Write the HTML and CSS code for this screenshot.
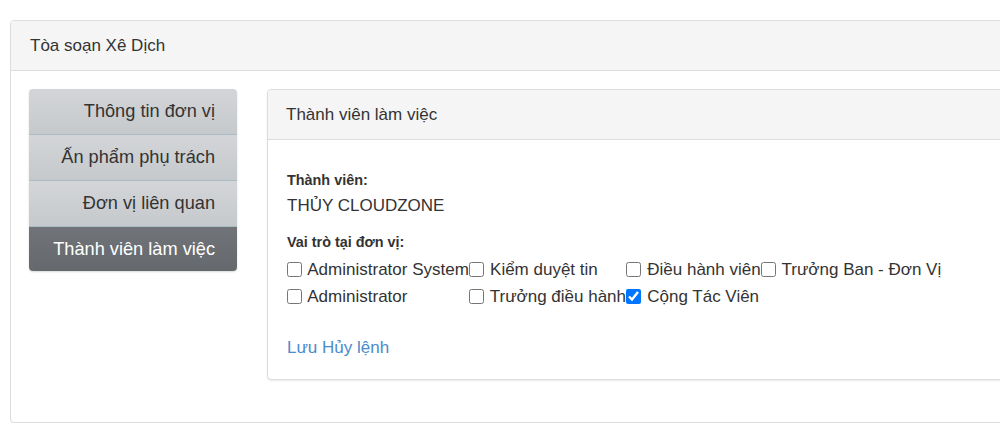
FILE: index.html
```html
<!DOCTYPE html>
<html lang="vi">
<head>
<meta charset="utf-8">
<title>Tòa soạn Xê Dịch</title>
<link rel="stylesheet" href="styles.css">
</head>
<body>
<div class="page">
  <div class="panel">
    <div class="panel-heading">Tòa soạn Xê Dịch</div>
    <div class="panel-body">
      <ul class="side-nav">
        <li class="nav-item">Thông tin đơn vị</li>
        <li class="nav-item">Ấn phẩm phụ trách</li>
        <li class="nav-item">Đơn vị liên quan</li>
        <li class="nav-item active">Thành viên làm việc</li>
      </ul>
      <div class="card">
        <div class="card-heading">Thành viên làm việc</div>
        <div class="card-body">
          <div class="field-label">Thành viên:</div>
          <div class="field-value">THỦY CLOUDZONE</div>
          <div class="field-label roles-label">Vai trò tại đơn vị:</div>
          <div class="roles">
            <label class="role"><input type="checkbox"> Administrator System</label>
            <label class="role"><input type="checkbox"> Kiểm duyệt tin</label>
            <label class="role"><input type="checkbox"> Điều hành viên</label>
            <label class="role"><input type="checkbox"> Trưởng Ban - Đơn Vị</label>
            <label class="role"><input type="checkbox"> Administrator</label>
            <label class="role"><input type="checkbox"> Trưởng điều hành</label>
            <label class="role"><input type="checkbox" checked> Cộng Tác Viên</label>
          </div>
          <div class="actions"><a href="#" class="link">Lưu</a> <a href="#" class="link">Hủy lệnh</a></div>
        </div>
      </div>
    </div>
  </div>
</div>
</body>
</html>
```

FILE: styles.css
```css
html, body {
  margin: 0;
  padding: 0;
  background: #fff;
  overflow: hidden;
}

body {
  font-family: "Liberation Sans", Arial, sans-serif;
  font-size: 17px;
  line-height: 24px;
  color: #333;
}

.page {
  padding: 20px 0 0 10px;
  width: 1030px;
}

.panel {
  border: 1px solid #ddd;
  border-radius: 4px;
  background: #fff;
  box-shadow: 0 1px 1px rgba(0, 0, 0, 0.05);
}

.panel-heading {
  background: #f5f5f5;
  border-bottom: 1px solid #ddd;
  padding: 12px 18px 12px 19px;
  height: 25px;
  line-height: 25px;
  border-radius: 3px 3px 0 0;
}

.panel-body {
  display: flex;
  align-items: flex-start;
  gap: 30px;
  padding: 18px 18px 42px 18px;
}

.side-nav {
  list-style: none;
  margin: 0;
  padding: 0;
  width: 208px;
  flex: none;
  border-radius: 4px;
  overflow: hidden;
  box-shadow: 0 1px 2px rgba(0, 0, 0, 0.15);
  font-size: 18.2px;
}

.nav-item {
  height: 45px;
  line-height: 45px;
  padding: 0 22px 0 8px;
  text-align: right;
  color: #333;
  background: linear-gradient(#d3d5d8, #c6c9cc);
  border-bottom: 1px solid #a9bcc2;
  white-space: nowrap;
}

.nav-item.active {
  height: 44px;
  line-height: 44px;
  border-bottom: none;
  color: #fff;
  background: linear-gradient(#707478, #65696d);
}

.card {
  flex: 1;
  border: 1px solid #ddd;
  border-radius: 4px;
  background: #fff;
  box-shadow: 0 1px 2px rgba(0, 0, 0, 0.08);
}

.card-heading {
  background: #f5f5f5;
  border-bottom: 1px solid #ddd;
  padding: 12px 18px;
  height: 25px;
  line-height: 25px;
  border-radius: 3px 3px 0 0;
}

.card-body {
  padding: 30px 18px 19px 19px;
}

.field-label {
  font-weight: bold;
  font-size: 14.4px;
  line-height: 20px;
  margin-bottom: 4px;
}

.field-value {
  line-height: 24px;
}

.roles-label {
  margin-top: 14px;
}

.roles {
  display: grid;
  grid-template-columns: repeat(4, auto);
  justify-content: start;
}

.role {
  display: flex;
  align-items: center;
  height: 27px;
  white-space: pre;
}

.role input {
  width: 15px;
  height: 15px;
  margin: 0 1.5px 0 0;
  accent-color: #0075ff;
}

.actions {
  margin-top: 26px;
  line-height: 24px;
}

.link {
  color: #4a8bcb;
  text-decoration: none;
}
```
